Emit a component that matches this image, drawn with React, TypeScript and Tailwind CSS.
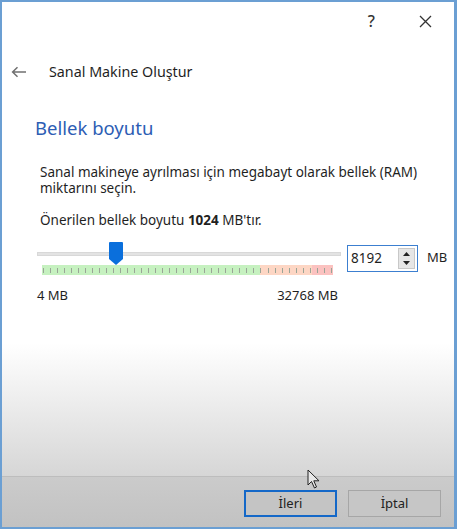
const font = { fontFamily: '"Noto Sans", "Open Sans", sans-serif' };

function Ticks() {
  const ticks = Array.from({ length: 42 });
  return (
    <div className="relative h-[10px] w-[291px] flex ml-[5px]">
      <div className="h-full w-[218px] bg-[#c6f1c0]" />
      <div className="h-full w-[52px] bg-[#fdd6c4]" />
      <div className="h-full w-[21px] bg-[#fbc2c0]" />
      <div className="absolute inset-0 flex justify-between items-center px-[1px]">
        {ticks.map((_, i) => (
          <div key={i} className="w-px h-[5px] bg-[#9aa597]" />
        ))}
      </div>
    </div>
  );
}

function Thumb() {
  return (
    <svg width="14" height="23" viewBox="0 0 14 23" className="absolute left-[72px] top-0">
      <path d="M1 0 H13 a1 1 0 0 1 1 1 V17 L7 23 L0 17 V1 a1 1 0 0 1 1 -1 Z" fill="#0a6fdc" />
    </svg>
  );
}

function Cursor() {
  return (
    <svg width="14" height="21" viewBox="0 0 14 21" className="absolute left-[305px] top-[467px]">
      <path d="M1 1 V16 L4.5 12.5 L7.5 19 L9.5 18 L6.8 11.8 H12 Z" fill="#e8e8e8" stroke="#222" strokeWidth="1" strokeLinejoin="round" />
    </svg>
  );
}

export default function App() {
  return (
    <div
      style={font}
      className="relative w-[457px] h-[529px] flex flex-col border-l-[2px] border-r-[3px] border-t-[2px] border-b-[2px] border-[#6b9fd3] text-[#1f1f1f] overflow-hidden"
    >
      <div className="flex-1 flex flex-col bg-[linear-gradient(to_bottom,#ffffff_0%,#ffffff_72%,#d6d6d6_100%)]">
        {/* title bar */}
        <div className="h-[38px] flex items-center justify-end pr-[22px] gap-[44px]">
          <span className="text-[16px] font-medium text-[#333]">?</span>
          <svg width="13" height="13" viewBox="0 0 13 13">
            <path d="M1 1 L12 12 M12 1 L1 12" stroke="#333" strokeWidth="1.3" />
          </svg>
        </div>

        {/* header */}
        <div className="h-[64px] flex items-center pl-[9px]">
          <svg width="16" height="12" viewBox="0 0 16 12">
            <path d="M15 6 H2 M6.5 1.2 L1.6 6 L6.5 10.8" fill="none" stroke="#707070" strokeWidth="1.5" />
          </svg>
          <span className="ml-[22px] text-[14.3px]">Sanal Makine Oluştur</span>
        </div>

        {/* content */}
        <div className="pl-[33px] pt-[12px]">
          <div className="text-[18.5px] leading-[24px] text-[#2d5db4]">Bellek boyutu</div>
          <div className="pl-[5px] pt-[24px] text-[13.5px] leading-[16px]">
            <p>
              Sanal makineye ayrılması için megabayt olarak bellek (RAM)
              <br />
              miktarını seçin.
            </p>
            <p className="mt-[16px]">
              Önerilen bellek boyutu <b>1024</b> MB'tır.
            </p>
          </div>

          <div className="flex items-start mt-[14px] pl-[2px]">
            <div className="w-[304px] shrink-0">
              <div className="relative h-[23px]">
                <div className="absolute left-0 right-0 top-[10px] h-[4px] bg-[#e3e3e3] border border-[#d8d8d8]" />
                <Thumb />
              </div>
              <Ticks />
              <div className="flex justify-between text-[13px] mt-[11px] pr-[3px]">
                <span>4 MB</span>
                <span>32768 MB</span>
              </div>
            </div>
            <div className="shrink-0 ml-[6px] mt-[3px] w-[71px] h-[27px] border border-[#3c7fd0] bg-white flex items-center justify-between pl-[3px] pr-[2px]">
              <span className="text-[13.5px]">8192</span>
              <div className="w-[17px] h-[21px] bg-[#e6e6e6] border border-[#c8c8c8] flex flex-col items-center justify-around">
                <svg width="7" height="4" viewBox="0 0 7 4">
                  <path d="M0 4 L3.5 0 L7 4 Z" fill="#222" />
                </svg>
                <svg width="7" height="4" viewBox="0 0 7 4">
                  <path d="M0 0 L7 0 L3.5 4 Z" fill="#222" />
                </svg>
              </div>
            </div>
            <span className="shrink-0 ml-[9px] mt-[6px] text-[13px]">MB</span>
          </div>
        </div>
      </div>

      {/* footer */}
      <div className="h-[51px] border-t border-[#bdbdbd] bg-[linear-gradient(to_bottom,#cbcbcb,#c2c2c2)] flex items-center justify-end gap-[11px] pr-[13px] pt-[3px]">
        <button className="w-[93px] h-[27px] border-[2px] border-[#1468c8] bg-[#c4c4c4] text-[13px] text-[#222]">
          İleri
        </button>
        <button className="w-[93px] h-[27px] border border-[#a6a6a6] bg-[#c6c6c6] text-[13px] text-[#222]">
          İptal
        </button>
      </div>

      <Cursor />
    </div>
  );
}
